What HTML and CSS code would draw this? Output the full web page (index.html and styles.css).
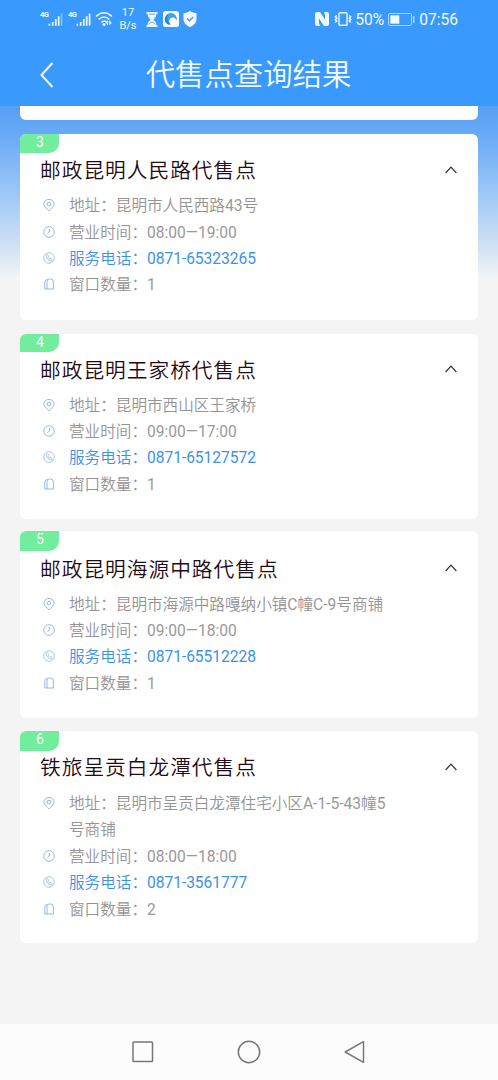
FILE: index.html
```html
<!DOCTYPE html>
<html lang="zh-CN">
<head>
<meta charset="utf-8">
<title>代售点查询结果</title>
<link rel="stylesheet" href="styles.css">
</head>
<body>
<svg class="defs" aria-hidden="true">
  <symbol id="pin" viewBox="0 0 12 12"><path d="M6 11.800C4.200 10 .900 7.800 .900 5.100a5.100 4.700 0 0 1 10.200 0C11.100 7.800 7.800 10 6 11.800Z"/><circle cx="6" cy="5.100" r="1.800"/></symbol>
  <symbol id="clock" viewBox="0 0 12 12"><circle cx="6" cy="6" r="5.300"/><path d="M6.300 3v3.300L4.400 7.600"/></symbol>
  <symbol id="phone" viewBox="0 0 12 12"><circle cx="6" cy="6" r="5.300"/><path d="M4.300 2.600 3.200 3.600C3.300 6.600 5.500 8.800 8.400 9l1-1.200L7.600 6.400l-.9.700L5 5.200l.8-.9Z"/></symbol>
  <symbol id="window" viewBox="0 0 12 12"><path d="M4 11V3.800Q4 1 6.200 1H7.500Q10.400 1 10.400 4V11H1.800V4.200Q1.800 1.500 4.500 1.300"/></symbol>
  <symbol id="signal" viewBox="0 0 16 14"><path d="M1.500 11v2M5 9v4M8.300 6v7M11.400 3v10"/><path class="last" d="M14.500 0v13"/></symbol>
</svg>
<div class="screen">
  <header class="top">
    <div class="status">
      <div class="status-left">
        <span class="net">4G</span><svg class="signal weak"><use href="#signal"/></svg>
        <span class="net sim-two">4G</span><svg class="signal"><use href="#signal"/></svg>
        <svg class="wifi" viewBox="0 0 18 16"><path d="M1 5.500Q9-2 17 5.500M3.600 8.500Q9 3.500 14.400 8.500M6.300 11.300Q9 9 11.300 10.800"/><circle cx="9" cy="13.500" r="1.500"/><path class="solid" d="m13 9-2.300 2.800L13 14.500ZM14.200 9l2.500 2.800-2.500 2.700Z"/></svg>
        <div class="speed"><span>17</span><span>B/s</span></div>
        <svg class="hourglass" viewBox="0 0 12 15"><path class="solid" d="M.500 0h11v1.800h-1C10.500 4.500 9 6 7.500 7.500 9 9 10.500 10.500 10.500 13.200h1V15H.500v-1.800h1C1.500 10.500 3 9 4.500 7.500 3 6 1.500 4.500 1.500 1.800h-1Z"/><path class="sand" d="M3 2.200h6M3 12.600Q6 7.500 9 12.600"/></svg>
        <svg class="app" viewBox="0 0 16 16"><rect width="16" height="16" rx="2.500" fill="#f5faff"/><path d="M3.300 12A6 6 0 1 1 13.600 9.500C12.500 6 8.500 5.500 6.500 8.500c-.8 1.500-.2 3.500 1 5Q5 14 3.300 12Z" fill="#3aa4e5"/><path d="M3.300 12A6 6 0 0 1 5 3.200C3.500 7 4 10.500 7.500 13.500Q5 14 3.300 12Z" fill="#2483cb"/></svg>
        <svg class="shield" viewBox="0 0 14 16"><path d="M7 0Q9.500 2 13.500 2.200V8c0 4-3 6.700-6.500 8C3.500 14.700.500 12 .500 8V2.200Q4.500 2 7 0Z" fill="#f3f9ff"/><path d="m4 7.500 2.300 2.300L10.300 6" fill="none" stroke="#3999f9" stroke-width="1.300"/></svg>
      </div>
      <div class="status-right">
        <svg class="nfc" viewBox="0 0 14 14"><path class="solid" d="M2 0H5L10 7.500V3L9 0h3q2 0 2 2v10q0 2-2 2H9L4 6.500V11L5 14H2q-2 0-2-2V2Q0 0 2 0Z"/></svg>
        <svg class="vibrate" viewBox="0 0 18 14"><rect x="5" y=".8" width="8" height="12.400" rx=".8"/><path d="M2.800 3.500 1.300 4.800 2.800 6.200 1.300 7.600 2.800 9 1.300 10.500M15.200 3.500l1.500 1.300-1.500 1.400 1.500 1.400L15.200 9l1.500 1.500"/></svg>
        <span class="percent">50%</span>
        <svg class="battery" viewBox="0 0 27 13"><rect class="case" x=".5" y=".5" width="23" height="12" rx="1.200"/><rect class="level" x="2.300" y="2.300" width="9" height="8.400"/><path d="M25.800 3.200v6.600"/></svg>
        <span>07:56</span>
      </div>
    </div>
    <div class="nav">
      <svg class="back" viewBox="0 0 14 26"><path d="M12.500 1 1.500 13l11 12"/></svg>
      <h1>代售点查询结果</h1>
    </div>
  </header>
  <main class="results">
    <div class="card-end"></div>
    <section class="card first">
      <span class="badge">3</span>
      <div class="heading"><h2>邮政昆明人民路代售点</h2><svg class="chevron" viewBox="0 0 12 8"><path d="M.600 7 6 1.200 11.400 7"/></svg></div>
      <ul>
        <li><svg><use href="#pin"/></svg><span>地址：昆明市人民西路<span class="number">43</span>号</span></li>
        <li><svg><use href="#clock"/></svg><span>营业时间：<span class="number">08:00—19:00</span></span></li>
        <li class="call"><svg><use href="#phone"/></svg><span>服务电话：<span class="number">0871-65323265</span></span></li>
        <li><svg><use href="#window"/></svg><span>窗口数量：<span class="number">1</span></span></li>
      </ul>
    </section>
    <section class="card second">
      <span class="badge">4</span>
      <div class="heading"><h2>邮政昆明王家桥代售点</h2><svg class="chevron" viewBox="0 0 12 8"><path d="M.600 7 6 1.200 11.400 7"/></svg></div>
      <ul>
        <li><svg><use href="#pin"/></svg><span>地址：昆明市西山区王家桥</span></li>
        <li><svg><use href="#clock"/></svg><span>营业时间：<span class="number">09:00—17:00</span></span></li>
        <li class="call"><svg><use href="#phone"/></svg><span>服务电话：<span class="number">0871-65127572</span></span></li>
        <li><svg><use href="#window"/></svg><span>窗口数量：<span class="number">1</span></span></li>
      </ul>
    </section>
    <section class="card third">
      <span class="badge">5</span>
      <div class="heading"><h2>邮政昆明海源中路代售点</h2><svg class="chevron" viewBox="0 0 12 8"><path d="M.600 7 6 1.200 11.400 7"/></svg></div>
      <ul>
        <li><svg><use href="#pin"/></svg><span>地址：昆明市海源中路嘎纳小镇<span class="number">C</span>幢<span class="number">C-9</span>号商铺</span></li>
        <li><svg><use href="#clock"/></svg><span>营业时间：<span class="number">09:00—18:00</span></span></li>
        <li class="call"><svg><use href="#phone"/></svg><span>服务电话：<span class="number">0871-65512228</span></span></li>
        <li><svg><use href="#window"/></svg><span>窗口数量：<span class="number">1</span></span></li>
      </ul>
    </section>
    <section class="card fourth">
      <span class="badge">6</span>
      <div class="heading"><h2>铁旅呈贡白龙潭代售点</h2><svg class="chevron" viewBox="0 0 12 8"><path d="M.600 7 6 1.200 11.400 7"/></svg></div>
      <ul>
        <li><svg><use href="#pin"/></svg><span>地址：昆明市呈贡白龙潭住宅小区<span class="number">A-1-5-43</span>幢<span class="number">5</span><br>号商铺</span></li>
        <li><svg><use href="#clock"/></svg><span>营业时间：<span class="number">08:00—18:00</span></span></li>
        <li class="call"><svg><use href="#phone"/></svg><span>服务电话：<span class="number">0871-3561777</span></span></li>
        <li><svg><use href="#window"/></svg><span>窗口数量：<span class="number">2</span></span></li>
      </ul>
    </section>
  </main>
  <footer class="system">
    <svg viewBox="0 0 24 24"><rect x="2" y="2" width="19.500" height="19.500" rx=".8"/></svg>
    <svg viewBox="0 0 24 24"><circle cx="12" cy="12" r="10.700"/></svg>
    <svg viewBox="0 0 24 24"><path d="M20.500 1.700v20.600L2.200 12Z"/></svg>
  </footer>
</div>
</body>
</html>
```
FILE: styles.css
```css
* { box-sizing: border-box; }
body { margin: 0; font-family: Roboto, "Noto Sans CJK SC", sans-serif; background: #f4f4f4; }
h1, h2, ul { margin: 0; padding: 0; font-weight: 350; }
svg { display: block; flex: none; fill: none; }
.defs { position: absolute; width: 0; height: 0; }
.screen { width: 498px; height: 1080px; display: flex; flex-direction: column; overflow: hidden; }

.top { flex: none; height: 106px; background: #3999fc; color: #f3f9ff; }
.status { height: 38px; padding: 0 40px 0 40px; display: flex; justify-content: space-between; }
.status-left, .status-right { display: flex; align-items: center; }
.status-left svg, .status-right svg { stroke: #f0f8ff; }
.status .solid { fill: #f0f8ff; stroke: none; }
.net { font: bold 7.500px/8px Roboto, sans-serif; margin-bottom: 9px; width: 8px; letter-spacing: -.5px; }
.net.sim-two { margin-left: 5px; }
.signal { width: 15px; height: 14px; stroke-width: 1.8; margin-top: 1px; }
.weak { --last: .4; }
.last { stroke-opacity: var(--last, 1); }
.wifi { width: 18px; height: 16px; margin-left: 4px; stroke-width: 1.6; }
.wifi circle { fill: #f0f8ff; stroke: none; }
.speed { width: 18px; margin-left: 6px; padding-top: 1px; font-size: 11px; line-height: 12.500px; display: flex; flex-direction: column; align-items: center; }
.hourglass { width: 12px; height: 15px; margin-left: 9px; }
.status-left .hourglass { stroke: none; }
.hourglass .sand { stroke: #3999fc; stroke-width: .8; }
.status-left .app, .status-left .shield { stroke: none; }
.app { width: 16px; height: 16px; margin-left: 5px; }
.shield { width: 14px; height: 16px; margin-left: 4px; }
.status-right { font-size: 15.600px; }
.status-right span { padding-top: 1px; }
.nfc { width: 14px; height: 14px; }
.status-right .nfc { stroke: none; }
.vibrate { width: 18px; height: 14px; margin-left: 5px; stroke-width: 1.400; }
.percent { margin-left: 3px; }
.battery { width: 27px; height: 13px; margin: 0 4px 0 4px; }
.battery .case { stroke-opacity: .65; }
.battery .level { fill: #f0f8ff; stroke: none; }
.nav { height: 68px; padding: 5px 39px 0 40px; display: grid; grid-template-columns: 14px 1fr 14px; align-items: start; }
.back { width: 14px; height: 26px; margin-top: 19px; stroke: #f3f9ff; stroke-width: 2; }
h1 { text-align: center; font-size: 29.400px; line-height: 50px; margin: 7px 0 0 -2px; white-space: nowrap; }

.results { flex: 1; min-height: 0; padding: 0 20px; background: linear-gradient(#579ff3 0, #67aaf8 28px, #a0c8f6 90px, #d0e1f4 140px, #f4f4f4 172px); }
.card-end { height: 14px; margin-bottom: 14px; border-radius: 0 0 6px 6px; background: #fff; }
.card { height: 185.500px; margin-bottom: 14px; border-radius: 6px; background: #fff; overflow: hidden; }
.badge { display: block; width: 39px; height: 18.500px; border-radius: 0 0 10px 0; background: #72ec9d; color: #fff; font-size: 14px; line-height: 16px; text-align: center; padding-left: 1px; }
.heading { height: 36px; padding: 1px 20px 0; display: flex; align-items: center; justify-content: space-between; }
h2 { font-size: 20.700px; line-height: 34px; letter-spacing: 1px; color: #1f0a16; }
.chevron { width: 12px; height: 8px; margin: 0 1px 3px 0; stroke: #333; stroke-width: 1.200; }
ul { list-style: none; padding: 4.600px 20px 0 23px; color: #949494; font-size: 15.600px; line-height: 26.400px; }
li { display: flex; align-items: flex-start; gap: 14px; }
li svg { width: 12px; height: 12px; margin-top: 6px; stroke: #78aade; stroke-width: .8; }
.call { color: #3c92e6; }
.call svg { stroke-width: .65; }
.number { font-weight: 400; color: #999; }
.call .number { color: inherit; letter-spacing: -.04px; }
.second { height: 185px; margin-bottom: 12.500px; }
.third { height: 186.500px; margin-bottom: 13px; }
.third .badge, .fourth .badge { height: 20px; }
.fourth { height: 212px; }
.fourth .heading { height: 34px; }
.fourth ul { padding-top: 6.400px; }

.system { flex: none; height: 56px; padding: 0 131px; display: flex; justify-content: space-between; align-items: center; background: #fcfcfc; }
.system svg { width: 24px; height: 24px; stroke: #777; stroke-width: 1.500; stroke-linejoin: round; }
```
